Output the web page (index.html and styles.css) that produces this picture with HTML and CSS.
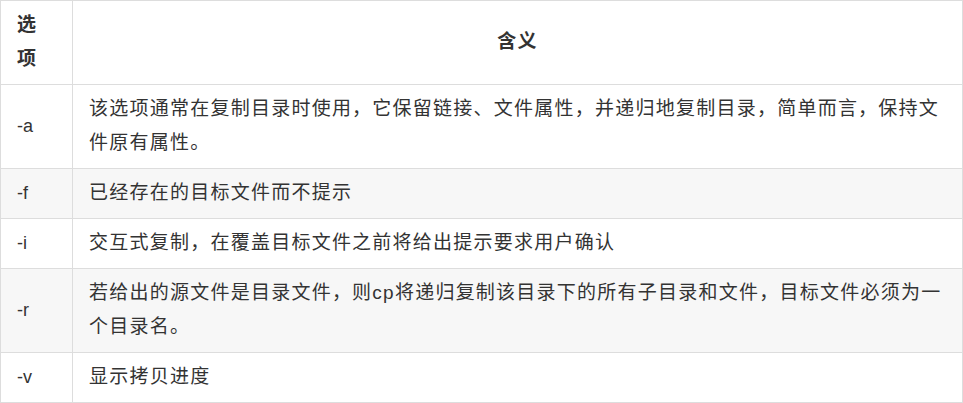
FILE: index.html
```html
<!DOCTYPE html>
<html lang="zh-CN">
<head>
<meta charset="utf-8">
<title>cp 选项</title>
<link rel="stylesheet" href="styles.css">
</head>
<body>
<table class="opts">
  <thead>
    <tr>
      <th class="col-opt">选项</th>
      <th class="col-desc">含义</th>
    </tr>
  </thead>
  <tbody>
    <tr>
      <td class="col-opt">-a</td>
      <td class="col-desc">该选项通常在复制目录时使用，它保留链接、文件属性，并递归地复制目录，简单而言，保持文件原有属性。</td>
    </tr>
    <tr>
      <td class="col-opt">-f</td>
      <td class="col-desc">已经存在的目标文件而不提示</td>
    </tr>
    <tr>
      <td class="col-opt">-i</td>
      <td class="col-desc">交互式复制，在覆盖目标文件之前将给出提示要求用户确认</td>
    </tr>
    <tr>
      <td class="col-opt">-r</td>
      <td class="col-desc">若给出的源文件是目录文件，则cp将递归复制该目录下的所有子目录和文件，目标文件必须为一个目录名。</td>
    </tr>
    <tr>
      <td class="col-opt">-v</td>
      <td class="col-desc">显示拷贝进度</td>
    </tr>
  </tbody>
</table>
</body>
</html>
```
FILE: styles.css
```css
html, body {
  margin: 0;
  padding: 0;
  background: #ffffff;
}

.opts {
  border-collapse: collapse;
  width: 963px;
  table-layout: fixed;
  font-family: "Liberation Sans", "Noto Sans CJK SC", sans-serif;
  font-size: 19px;
  letter-spacing: 1.24px;
  color: #333333;
}

.opts th,
.opts td {
  border: 1px solid #dddddd;
  padding: 7px 16px 8px 16px;
  line-height: 34px;
  vertical-align: middle;
  word-break: break-all;
}

.opts th {
  font-weight: bold;
  background: #ffffff;
}

.opts .col-opt {
  width: 39px;
  text-align: left;
}

.opts td.col-opt {
  font-size: 18px;
  letter-spacing: 0;
}

.opts th.col-desc {
  text-align: center;
}

.opts td.col-desc {
  text-align: left;
}

.opts tbody tr:nth-child(even) td {
  background: #f7f7f7;
}
```
